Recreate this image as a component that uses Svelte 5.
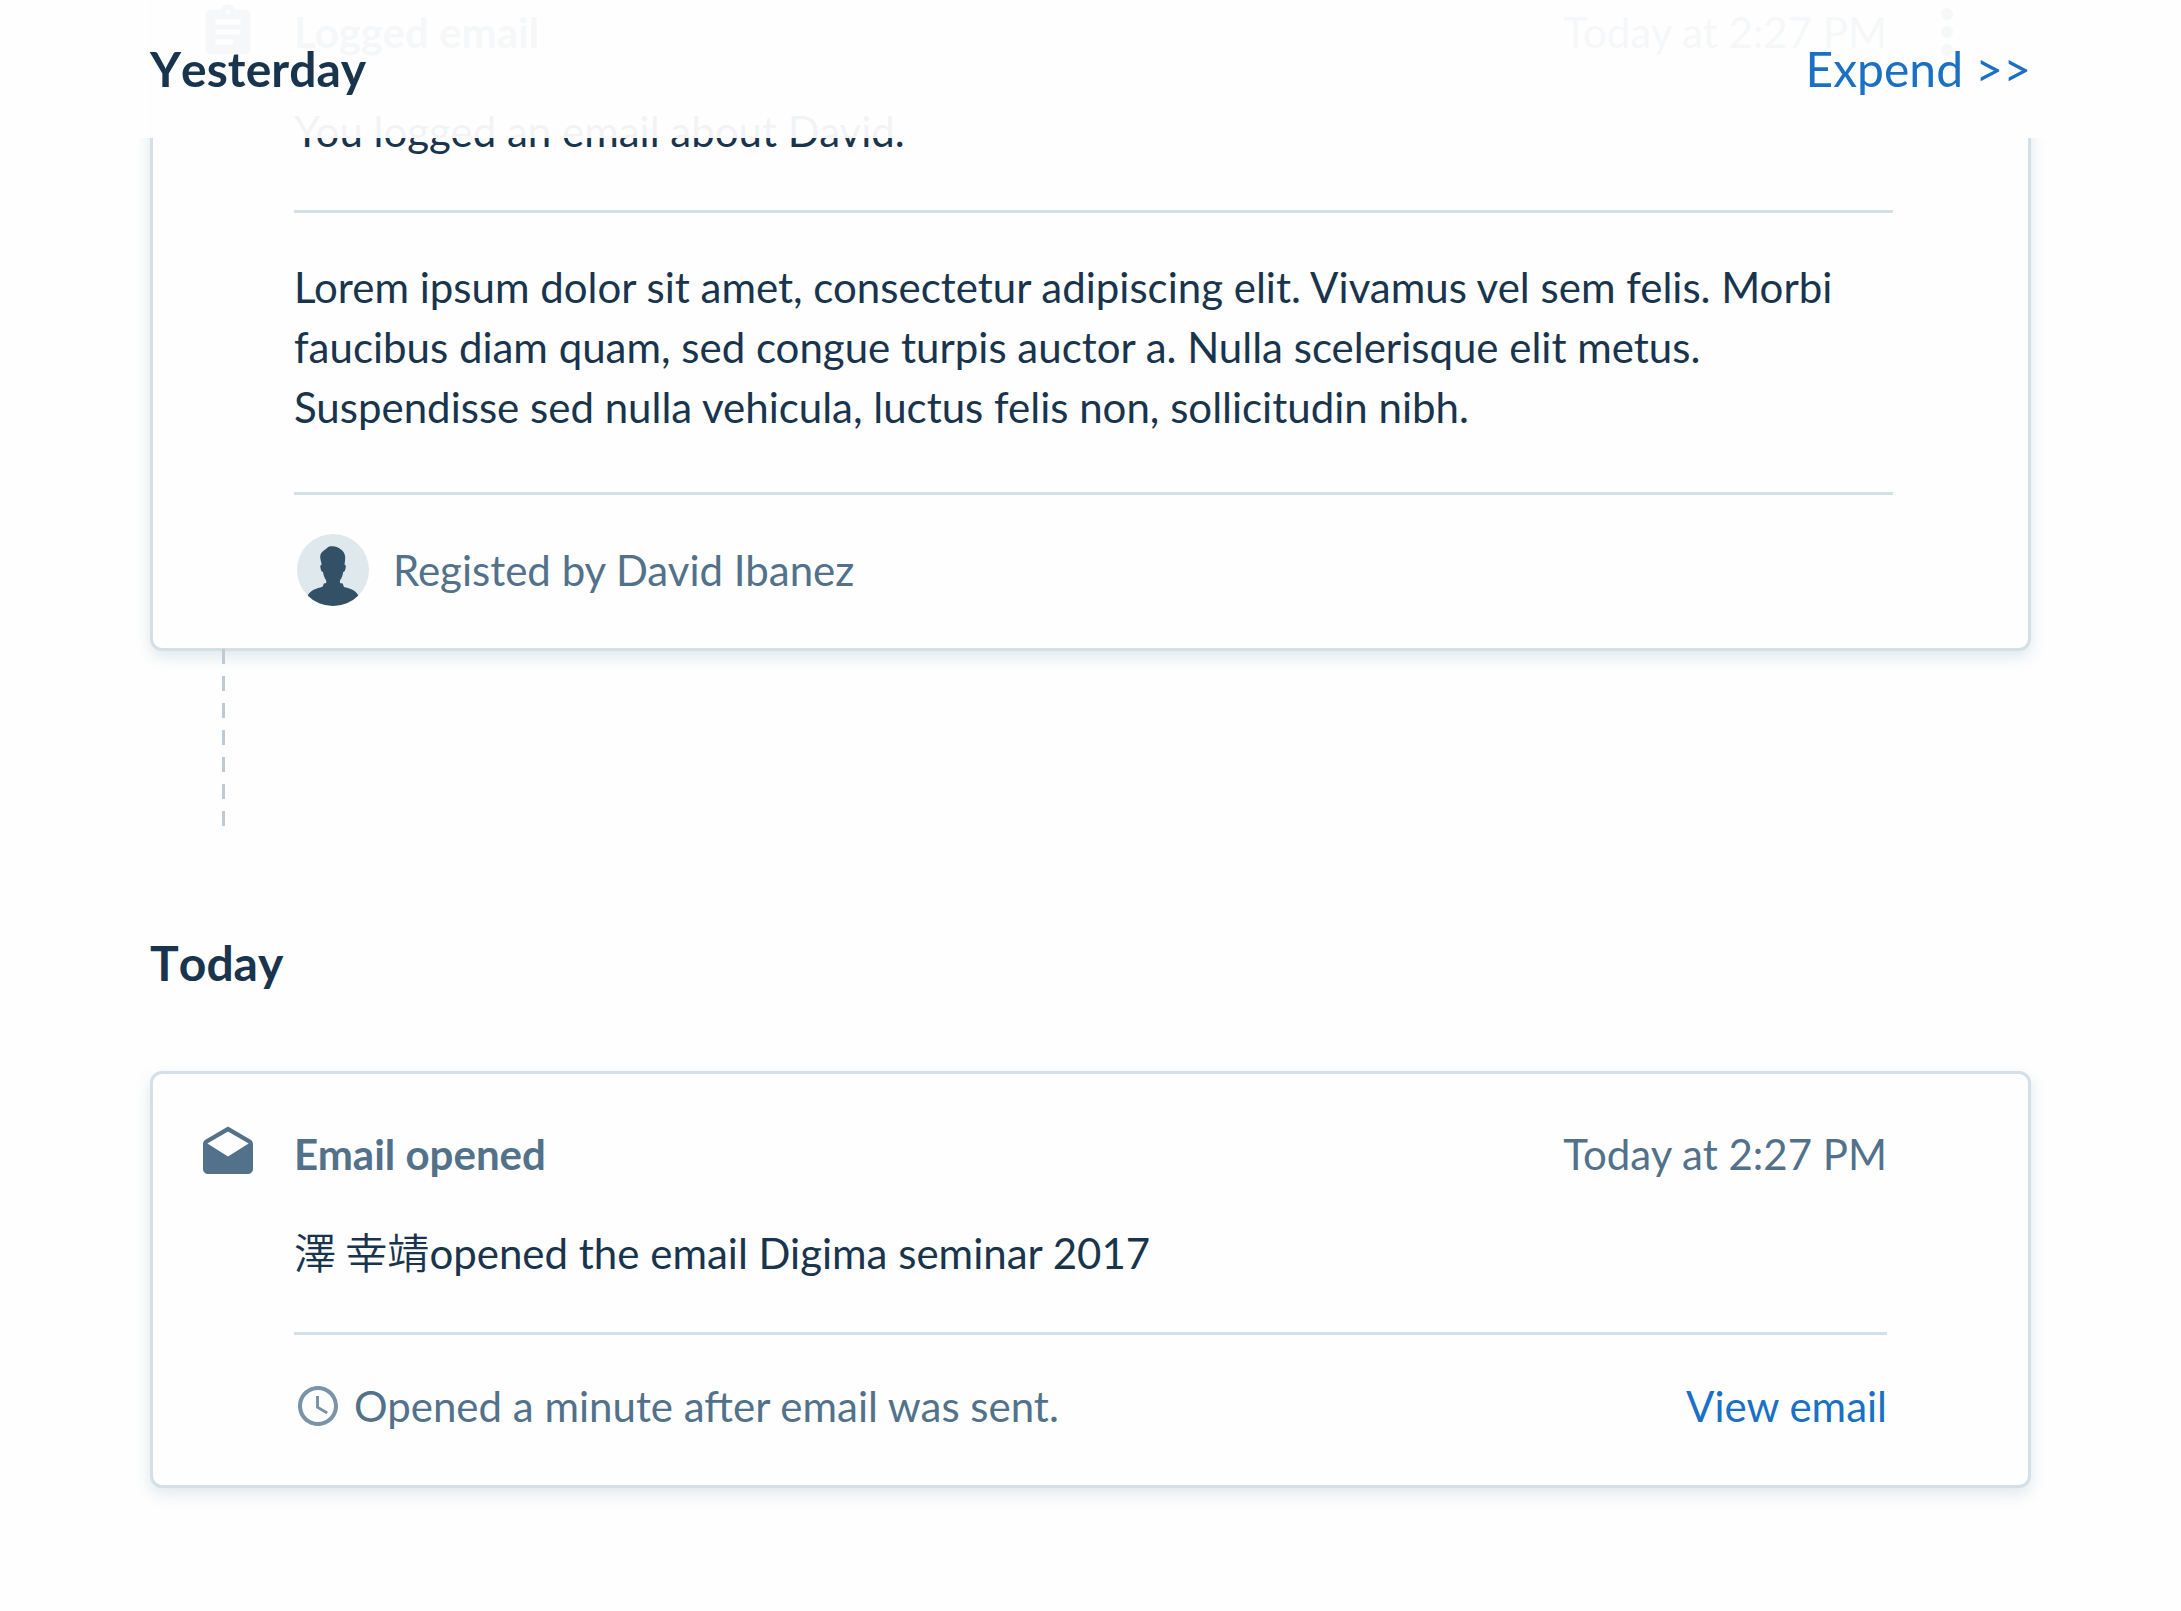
<script>
  const loggedBody =
    'Lorem ipsum dolor sit amet, consectetur adipiscing elit. Vivamus vel sem felis. Morbi faucibus diam quam, sed congue turpis auctor a. Nulla scelerisque elit metus. Suspendisse sed nulla vehicula, luctus felis non, sollicitudin nibh.';
</script>

<main class="timeline">
  <section class="day past">
    <header class="day-head pinned">
      <h2>Yesterday</h2>
      <a href="#yesterday">Expend &gt;&gt;</a>
    </header>

    <article class="card">
      <div class="card-head">
        <svg class="kind" viewBox="0 0 24 24" aria-hidden="true">
          <path d="M19 3h-4.18C14.4 1.84 13.3 1 12 1c-1.3 0-2.4.84-2.82 2H5c-1.1 0-2 .9-2 2v14c0 1.1.9 2 2 2h14c1.1 0 2-.9 2-2V5c0-1.1-.9-2-2-2zm-7 0c.55 0 1 .45 1 1s-.45 1-1 1-1-.45-1-1 .45-1 1-1zm2 14H7v-2h7v2zm3-4H7v-2h10v2zm0-4H7V7h10v2z" />
        </svg>
        <h3>Logged email</h3>
        <time>Today at 2:27 PM</time>
        <button class="more" type="button" aria-label="More actions">
          <svg viewBox="0 0 24 24" aria-hidden="true">
            <circle cx="12" cy="6" r="2" />
            <circle cx="12" cy="12" r="2" />
            <circle cx="12" cy="18" r="2" />
          </svg>
        </button>
      </div>
      <div class="card-body wide">
        <p class="summary">You logged an email about David.</p>
        <p class="message">{loggedBody}</p>
        <footer class="author">
          <svg class="avatar" viewBox="0 0 72 72" aria-hidden="true">
            <defs><clipPath id="avatar-clip"><circle cx="36" cy="36" r="36" /></clipPath></defs>
            <circle class="avatar-bg" cx="36" cy="36" r="36" />
            <path
              class="avatar-fg"
              clip-path="url(#avatar-clip)"
              d="M29.500 14.500C31 12.500 33.500 12 36 12.300c2.500.2 5 1 7 2.500 3.500 2.200 5 5.200 5.200 8.200.1 2.500-.4 5-.7 7.800 1.500 0 1.500 1.700 1 3.700-.4 2-1 3.500-2.300 3.500-.5 3.500-1.500 6-3 8-.4 1.300-.4 2.500 0 3.300h1.600c1.200 0 1.200 1.500 2.200 3.700 5 1.500 11.500 2.500 14 8V74H11V61c3-5.500 9-6.500 14-8 1.700-.8 1.200-3.700 2.500-3.700h1.500c.4-1 .3-2.200 0-3.300-1.500-2-2.500-4.500-3-8-1.300 0-2-1.500-2.400-3.500-.5-2-.4-3.700 1-3.700-.3-3-1.500-5.500-1.400-8 .1-2.800 1.300-4.500 3.300-6z"
            />
          </svg>
          <span>Registed by David Ibanez</span>
        </footer>
      </div>
    </article>
    <div class="connector"></div>
  </section>

  <section class="day">
    <header class="day-head">
      <h2>Today</h2>
    </header>

    <article class="card spaced">
      <div class="card-head">
        <svg class="kind" viewBox="0 0 24 24" aria-hidden="true">
          <path d="M21.990 8c0-.72-.37-1.350-.94-1.700L12 1 2.950 6.300C2.380 6.650 2 7.280 2 8v10c0 1.100.9 2 2 2h16c1.100 0 2-.9 2-2l-.010-10zM12 13L3.740 7.840 12 3l8.260 4.840L12 13z" />
        </svg>
        <h3>Email opened</h3>
        <time>Today at 2:27 PM</time>
        <span class="more"></span>
      </div>
      <div class="card-body">
        <p class="summary"><span class="name" lang="ja">澤 幸靖</span>opened the email Digima seminar 2017</p>
        <footer class="status">
          <svg class="clock" viewBox="0 0 24 24" aria-hidden="true">
            <path d="M11.990 2C6.470 2 2 6.480 2 12s4.470 10 9.990 10C17.520 22 22 17.520 22 12S17.520 2 11.990 2zM12 20c-4.420 0-8-3.580-8-8s3.580-8 8-8 8 3.580 8 8-3.580 8-8 8z" />
            <path d="M12.500 7H11v6l5.250 3.150.75-1.230-4.500-2.670z" />
          </svg>
          <span>Opened a minute after email was sent.</span>
          <a href="#email">View email</a>
        </footer>
      </div>
    </article>
  </section>
</main>

<style>
  :global(body) {
    margin: 0;
    background: #fefefe;
  }

  .timeline {
    display: flow-root;
    padding: 0 150px 123px;
    color: #19344d;
    font-family: Lato, 'Noto Sans CJK JP', sans-serif;
    font-size: 42px;
    line-height: 60px;
  }

  h2,
  h3,
  p {
    margin: 0;
  }

  a {
    color: #1a70c4;
    text-decoration: none;
  }

  .past {
    margin-top: -51px;
  }

  .day-head {
    display: flex;
    align-items: center;
    justify-content: space-between;
    height: 138px;
    font-size: 48px;
  }

  .day-head h2 {
    font-size: 48px;
    font-weight: 700;
    font-kerning: none;
  }

  .pinned {
    position: fixed;
    inset: 0 0 auto;
    z-index: 1;
    padding: 0 150px;
    background: rgba(254, 254, 254, 0.95);
  }

  .card {
    border: 3px solid #d4dfe6;
    border-radius: 12px;
    background: #fefefe;
    box-shadow: 0 6px 15px rgba(64, 118, 140, 0.16);
  }

  .spaced {
    margin-top: 39px;
  }

  .card-head {
    display: flex;
    align-items: center;
    padding: 50px 45px 0;
    color: #52718a;
    height: 60px;
  }

  .kind {
    flex: none;
    width: 60px;
    height: 60px;
    margin-right: 36px;
    fill: currentColor;
  }

  .card-head h3 {
    flex: 1;
    font-size: 42px;
    font-weight: 700;
  }

  .more {
    flex: none;
    width: 72px;
    height: 72px;
    margin-left: 24px;
    padding: 0;
    border: 0;
    background: none;
    color: inherit;
  }

  .more svg {
    display: block;
    width: 72px;
    height: 72px;
    fill: currentColor;
  }

  .card-body {
    padding: 39px 141px 0;
  }

  .wide {
    padding-right: 135px;
  }

  .summary,
  .message {
    border-bottom: 3px solid #d4dfe6;
  }

  .summary {
    padding-bottom: 49px;
  }

  .name {
    font-family: 'Noto Sans CJK JP', sans-serif;
    font-weight: 350;
    line-height: 1;
  }

  .message {
    padding: 44px 0 55px;
  }

  .author,
  .status {
    display: flex;
    align-items: center;
    color: #52718a;
  }

  .author {
    gap: 24px;
    padding: 39px 3px 42px;
  }

  .avatar {
    width: 72px;
    height: 72px;
  }

  .avatar-bg {
    fill: #dfe8ed;
  }

  .avatar-fg {
    fill: #335166;
  }

  .status {
    gap: 12px;
    padding: 41px 0 49px;
  }

  .status a {
    margin-left: auto;
  }

  .clock {
    width: 48px;
    height: 48px;
    fill: #7994a8;
  }

  /* Dashed rail that starts on the card's bottom edge */
  .connector {
    position: relative;
    width: 3px;
    height: 178px;
    margin: -2px 0 67px 72px;
    background: repeating-linear-gradient(#bccbd5 0 15px, transparent 15px 27px);
  }
</style>
